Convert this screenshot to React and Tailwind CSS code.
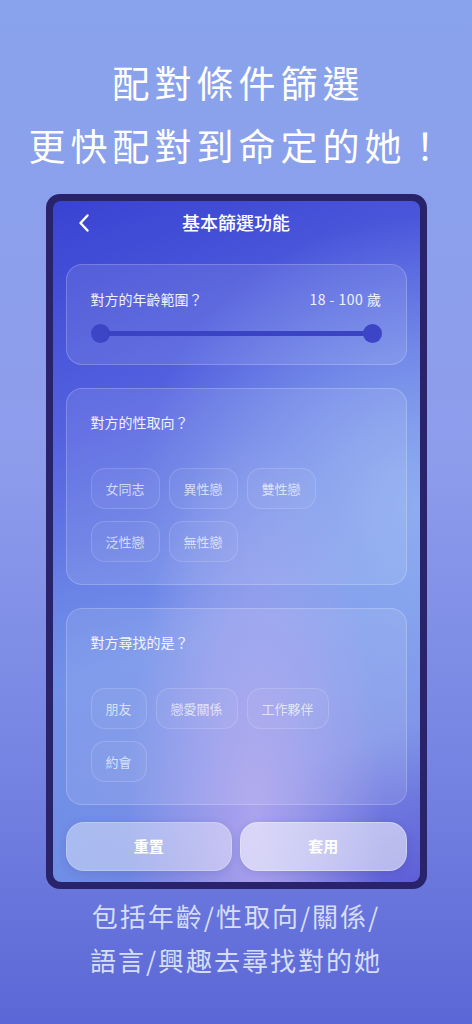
import React, { useState } from 'react';

const FONT = { fontFamily: '"Noto Sans CJK TC", "Noto Sans", sans-serif' };

const orientations = [['女同志', '異性戀', '雙性戀'], ['泛性戀', '無性戀']];
const lookingFor = [['朋友', '戀愛關係', '工作夥伴'], ['約會']];

function Chip({ label, active, onClick }) {
  return (
    <button
      type="button"
      onClick={onClick}
      className={`h-[41px] min-w-[54px] px-[14px] rounded-[14px] border text-[13px] leading-none ${active ? 'bg-white/25 border-white/40 text-white' : 'bg-white/[0.04] border-white/15 text-white/70'}`}
    >
      {label}
    </button>
  );
}

function ChipCard({ title, rows, selected, onToggle }) {
  return (
    <div className="h-[197px] rounded-[16px] border border-white/20 bg-white/10 px-[24px] pt-[22px]">
      <p className="text-[14px] leading-[22px] text-white/90">{title}</p>
      <div className="mt-[35px] flex flex-col gap-[12px]">
        {rows.map((row, i) => (
          <div key={i} className="flex gap-[9px]">
            {row.map(c => (
              <Chip key={c} label={c} active={selected.includes(c)} onClick={() => onToggle(c)} />
            ))}
          </div>
        ))}
      </div>
    </div>
  );
}

export default function App() {
  const [picked, setPicked] = useState([]);
  const toggle = (c) => setPicked(prev => prev.includes(c) ? prev.filter(x => x !== c) : [...prev, c]);

  return (
    <div style={FONT} className="w-[472px] h-[1024px] overflow-hidden flex flex-col items-center bg-[linear-gradient(180deg,#89a3ec_0%,#8e9cec_45%,#7584e2_75%,#5b67d6_100%)]">
      {/* headline */}
      <h1 className="pt-[51px] pl-[5px] text-center text-white text-[37px] leading-[63px] tracking-[5px] font-normal">
        配對條件篩選<br />更快配對到命定的她！
      </h1>

      {/* phone */}
      <div className="mt-[17px] w-[381px] h-[695px] rounded-[14px] border-[7px] border-[#28236a] bg-[#28236a]">
        <div className="h-full rounded-[8px] overflow-hidden flex flex-col px-[13px] bg-[radial-gradient(ellipse_at_55%_92%,#aca4ee_0%,rgba(172,164,238,0)_45%),radial-gradient(ellipse_at_100%_45%,#8eacf0_0%,rgba(142,172,240,0)_55%),radial-gradient(ellipse_at_0%_100%,#6f8ee6_0%,rgba(111,142,230,0)_35%),linear-gradient(160deg,#3943d2_0%,#5563e0_30%,#7493ea_60%,#7c8ee6_80%,#5e5ed6_100%)]">
          {/* header */}
          <div className="relative h-[42px] flex items-center justify-center">
            <svg className="absolute left-[11px] top-[12px]" width="14" height="20" viewBox="0 0 14 20" fill="none">
              <path d="M10.5 2.5 L3.5 10 L10.5 17.5" stroke="white" strokeWidth="2.4" strokeLinecap="round" strokeLinejoin="round" />
            </svg>
            <span className="text-white text-[18px] font-medium">基本篩選功能</span>
          </div>

          {/* age card */}
          <div className="mt-[21px] h-[101px] rounded-[16px] border border-white/20 bg-white/10 px-[24px] pt-[23px]">
            <div className="flex justify-between text-[14px] leading-[22px] text-white/90">
              <span>對方的年齡範圍？</span>
              <span className="tracking-[0.5px]">18 - 100 歲</span>
            </div>
            <div className="mt-[14px] h-[19px] flex items-center">
              <span className="w-[19px] h-[19px] rounded-full bg-[#3c45c6] shrink-0" />
              <span className="flex-1 h-[5px] -mx-[2px] bg-[#3a43c4]" />
              <span className="w-[19px] h-[19px] rounded-full bg-[#3c45c6] shrink-0" />
            </div>
          </div>

          <div className="mt-[23px]">
            <ChipCard title="對方的性取向？" rows={orientations} selected={picked} onToggle={toggle} />
          </div>
          <div className="mt-[23px]">
            <ChipCard title="對方尋找的是？" rows={lookingFor} selected={picked} onToggle={toggle} />
          </div>

          {/* actions */}
          <div className="mt-[17px] grid grid-cols-2 gap-[8px]">
            <button type="button" onClick={() => setPicked([])} className="h-[49px] rounded-[18px] border border-white/20 bg-white/40 text-white text-[15px] font-bold shadow-[0_2px_8px_rgba(40,40,120,0.15)]">重置</button>
            <button type="button" className="h-[49px] rounded-[18px] border border-white/30 bg-white/55 text-white text-[15px] font-bold shadow-[0_2px_8px_rgba(40,40,120,0.15)]">套用</button>
          </div>
        </div>
      </div>

      {/* footer text */}
      <p className="mt-[5px] text-center text-[#d6def5] text-[26px] leading-[44px] tracking-[2px]">
        包括年齡/性取向/關係/<br />語言/興趣去尋找對的她
      </p>
    </div>
  );
}
